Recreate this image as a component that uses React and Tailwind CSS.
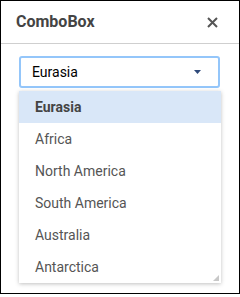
import { useState } from "react";

const regions = ["Eurasia", "Africa", "North America", "South America", "Australia", "Antarctica"];

export default function App() {
  const [selected] = useState("Eurasia");

  return (
    <div className="w-[240px] h-[294px] border border-black bg-white font-['Roboto',sans-serif]">
      {/* header */}
      <div className="flex items-center justify-between h-[43px] border-b border-[#cfcfcf] pl-[15px] pr-[21px]">
        <span className="text-[16px] font-bold text-[#444]">ComboBox</span>
        <svg width="11" height="11" viewBox="0 0 11 11" className="text-[#555]">
          <path d="M1 1L10 10M10 1L1 10" stroke="currentColor" strokeWidth="2" />
        </svg>
      </div>

      <div className="pl-[18px] pr-[19px] pt-[12px]">
        {/* input */}
        <div className="flex items-center justify-between h-[32px] border-2 border-[#94c6fa] rounded-[3px] pl-[11px] pr-[17px]">
          <span className="text-[14px] text-black">{selected}</span>
          <svg width="7" height="4" viewBox="0 0 7 4">
            <path d="M0 0H7L3.5 4Z" fill="#2f4a7a" />
          </svg>
        </div>

        {/* list */}
        <div className="relative mt-[3px] w-[202px] bg-white shadow-[0_1px_4px_rgba(0,0,0,0.25)]">
          {regions.map((r) => (
            <div
              key={r}
              className={`h-[32px] flex items-center pl-[16px] text-[14px] ${
                r === selected ? "bg-[#d9e7f8] font-bold text-[#444]" : "text-[#555]"
              }`}
            >
              {r}
            </div>
          ))}
          <svg width="6" height="6" viewBox="0 0 6 6" className="absolute right-[2px] bottom-[2px]">
            <path d="M6 0V6H0Z" fill="#c8c8c8" />
          </svg>
        </div>
      </div>
    </div>
  );
}
